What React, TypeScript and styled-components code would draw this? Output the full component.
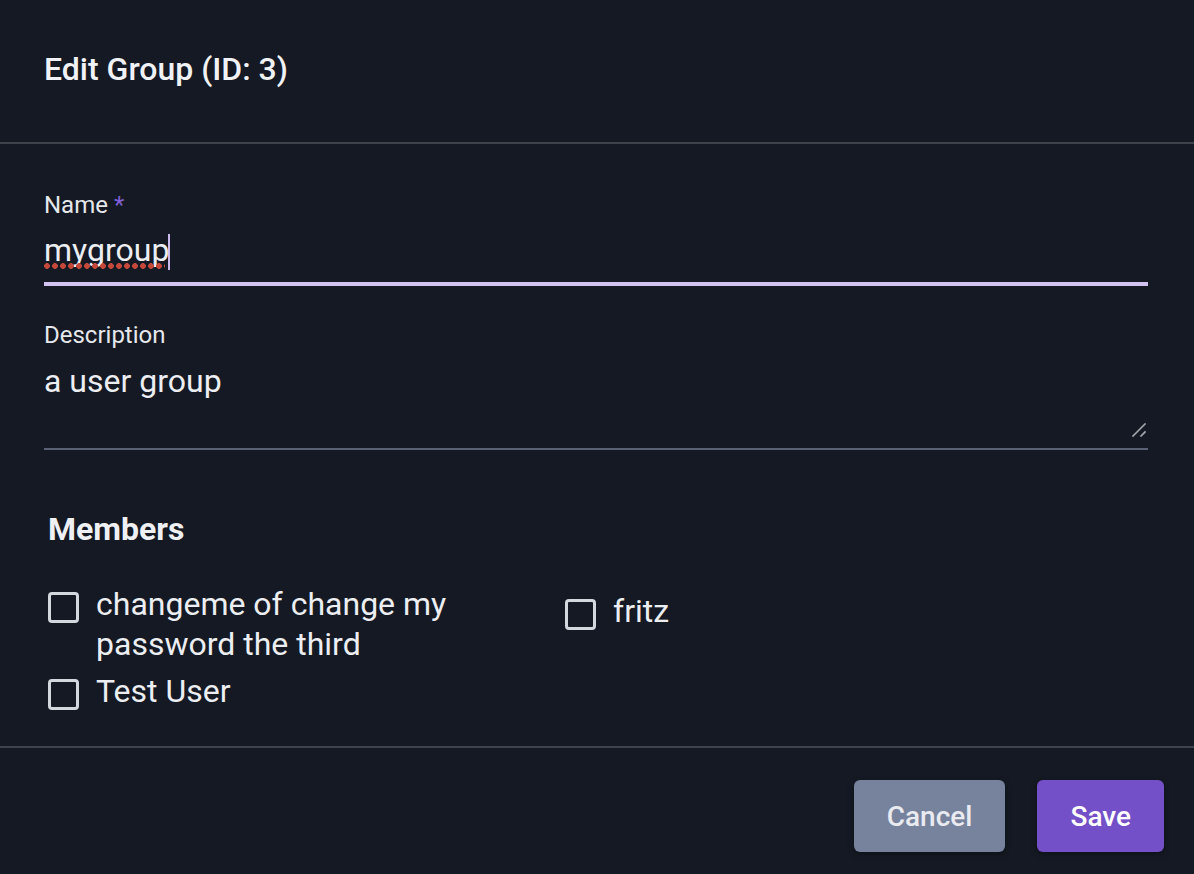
import React from "react";
import styled, { createGlobalStyle } from "styled-components";

const GlobalStyle = createGlobalStyle`
  html, body {
    margin: 0;
    padding: 0;
    background: #141923;
  }
  body {
    font-family: Roboto, "Noto Sans", "Liberation Sans", sans-serif;
    color: #e5e7eb;
  }
`;

const Dialog = styled.div`
  width: 1194px;
  height: 874px;
  background: #141923;
  display: flex;
  flex-direction: column;
  overflow: hidden;
`;

const Header = styled.header`
  height: 93px;
  padding: 49px 44px 0;
  border-bottom: 2px solid #3d424b;
`;

const Title = styled.h2`
  margin: 0;
  font-size: 32px;
  line-height: 40px;
  font-weight: 500;
  color: #f1f2f5;
`;

const Body = styled.div`
  flex: 1;
  padding: 45px 46px 0 44px;
`;

const Field = styled.div<{ $gap?: number }>`
  margin-top: ${(p) => p.$gap ?? 0}px;
  display: flex;
  flex-direction: column;
`;

const Label = styled.label<{ $space: number }>`
  font-size: 24px;
  line-height: 32px;
  color: #e6e8ec;
  margin-bottom: ${(p) => p.$space}px;
`;

const Required = styled.span`
  color: #7f5fd3;
  margin-left: 6px;
`;

const NameValue = styled.div`
  display: flex;
  align-items: flex-start;
  font-size: 32px;
  line-height: 40px;
  color: #eceef2;
  padding-bottom: 12px;
  border-bottom: 4px solid #d3c3f1;
`;

const Misspelled = styled.span`
  position: relative;
  &::after {
    content: "";
    position: absolute;
    left: 0;
    right: 4px;
    bottom: 1px;
    height: 6px;
    background-image: radial-gradient(circle at 3px 3px, #c5493b 2.6px, transparent 3.1px);
    background-size: 8px 6px;
    background-repeat: repeat-x;
  }
`;

const Caret = styled.span`
  width: 2px;
  height: 36px;
  margin-top: 4px;
  margin-left: -1px;
  background: #c9b9ef;
`;

const AreaWrap = styled.div`
  position: relative;
  padding-bottom: 7px;
  border-bottom: 2px solid #5a6174;
`;

const TextArea = styled.textarea`
  display: block;
  width: 100%;
  height: 80px;
  box-sizing: border-box;
  margin: 0;
  padding: 0;
  border: none;
  outline: none;
  resize: none;
  background: transparent;
  font-family: inherit;
  font-size: 32px;
  line-height: 40px;
  color: #eceef2;
`;

const Grip = styled.svg`
  position: absolute;
  right: 2px;
  bottom: 11px;
  width: 14px;
  height: 14px;
`;

const MembersTitle = styled.h3`
  margin: 59px 0 0;
  padding-left: 4px;
  font-size: 32px;
  line-height: 40px;
  font-weight: 700;
  color: #eef0f3;
`;

const MemberGrid = styled.div`
  margin-top: 35px;
  padding-left: 4px;
  display: grid;
  grid-template-columns: repeat(2, 485px);
  column-gap: 32px;
  row-gap: 7px;
  align-items: start;

  & > :nth-child(2n) {
    margin-top: 7px;
  }
`;

const Member = styled.label`
  display: flex;
  align-items: flex-start;
  gap: 17px;
  font-size: 32px;
  line-height: 40px;
  color: #eceef2;
`;

const Box = styled.span`
  flex: none;
  width: 31px;
  height: 31px;
  box-sizing: border-box;
  margin-top: 8px;
  border: 3px solid #d3d7de;
  border-radius: 4px;
`;

const Footer = styled.footer`
  border-top: 2px solid #3d424b;
  padding: 32px 30px 22px;
  display: flex;
  justify-content: flex-end;
  gap: 32px;
`;

const Button = styled.button<{ $primary?: boolean }>`
  height: 72px;
  padding: 0 33px;
  border: none;
  border-radius: 6px;
  font-family: inherit;
  font-size: 28px;
  font-weight: 500;
  color: ${(p) => (p.$primary ? "#ffffff" : "#e9ebf0")};
  background: ${(p) => (p.$primary ? "#7450c8" : "#77829c")};
  box-shadow: 0 2px 6px rgba(0, 0, 0, 0.35);
`;

const members = ["changeme of change my password the third", "fritz", "Test User"];

export default function App() {
  return (
    <>
      <GlobalStyle />
      <Dialog>
        <Header>
          <Title>Edit Group (ID: 3)</Title>
        </Header>
        <Body>
          <Field>
            <Label $space={9}>
              Name<Required>*</Required>
            </Label>
            <NameValue>
              <Misspelled>mygroup</Misspelled>
              <Caret />
            </NameValue>
          </Field>
          <Field $gap={33}>
            <Label $space={10}>Description</Label>
            <AreaWrap>
              <TextArea defaultValue="a user group" />
              <Grip viewBox="0 0 14 14">
                <path d="M1 13 L13 1 M9 13 L13 9" stroke="#1b1f27" strokeWidth="3.2" strokeLinecap="square" />
                <path d="M1 13 L13 1 M9 13 L13 9" stroke="#a3a7ae" strokeWidth="1.6" strokeLinecap="square" />
              </Grip>
            </AreaWrap>
          </Field>
          <MembersTitle>Members</MembersTitle>
          <MemberGrid>
            {members.map((m) => (
              <Member key={m}>
                <Box />
                <span>{m}</span>
              </Member>
            ))}
          </MemberGrid>
        </Body>
        <Footer>
          <Button>Cancel</Button>
          <Button $primary>Save</Button>
        </Footer>
      </Dialog>
    </>
  );
}
